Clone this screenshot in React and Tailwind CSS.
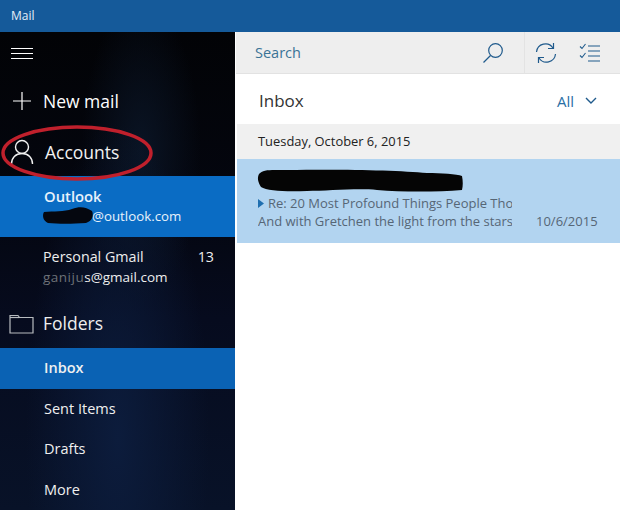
function Row({ children, className = "" }) {
  return <div className={`flex items-center h-[40.5px] pl-[44px] text-[14.5px] text-[#f0f0f0] ${className}`}>{children}</div>;
}

export default function App() {
  return (
    <div className="w-[620px] h-[510px] overflow-hidden flex flex-col bg-white font-['Open_Sans',sans-serif]">
      <div className="h-[32px] shrink-0 flex items-center pl-[11px] bg-[#155a9a] text-[#e4eef7] text-[12px]">Mail</div>
      <div className="flex flex-1 min-h-0">
        <aside className="relative w-[235px] shrink-0 flex flex-col bg-[radial-gradient(ellipse_at_50%_85%,#0c1c3c_0%,rgba(10,22,48,0)_55%),radial-gradient(ellipse_at_60%_25%,#0a1424_0%,rgba(10,20,36,0)_30%),linear-gradient(180deg,#020306_0%,#04060f_35%,#060b1e_60%,#081228_100%)]">
          <div className="h-[42px] flex items-center pl-[11px]">
            <div className="w-[22px] flex flex-col gap-[4px]">
              <div className="h-px bg-white" /><div className="h-px bg-white" /><div className="h-px bg-white" />
            </div>
          </div>
          <div className="h-[54px] flex items-center text-white text-[17.5px]">
            <svg width="20" height="20" viewBox="0 0 20 20" className="ml-[12px] mr-[11px]" stroke="#fff" strokeWidth="1.2"><path d="M10 1v18M1 10h18" /></svg>
            New mail
          </div>
          <div className="h-[48px] flex items-center text-[#f2f2f2] text-[17.5px]">
            <svg width="24" height="26" viewBox="0 0 24 26" className="ml-[10px] mr-[11px]" fill="none" stroke="#f2f2f2" strokeWidth="1.4"><circle cx="12" cy="8" r="6.5" /><path d="M1.5 25c0-6 4-10.500 10.500-10.500S22.500 19 22.500 25" /></svg>
            Accounts
          </div>
          <div className="h-[61px] pb-[1px] flex flex-col justify-center pl-[44px] bg-[#0a6cc4] text-[#e8f2fb]">
            <div className="text-[14.800px] leading-[20px] font-semibold">Outlook</div>
            <div className="text-[13.300px] leading-[20px] pl-[48px]">@outlook.com</div>
          </div>
          <div className="h-[61px] pb-[1px] flex flex-col justify-center pl-[43px] text-[#eeeeee]">
            <div className="flex justify-between pr-[21px] text-[14.300px] leading-[20px]"><span>Personal Gmail</span><span>13</span></div>
            <div className="text-[13.500px] leading-[20px]"><span className="text-[#6d7177] tracking-[0.5px]">ganiju</span>s@gmail.com</div>
          </div>
          <div className="h-[50px] pt-[1px] flex items-center text-[#eeeeee] text-[17.5px]">
            <svg width="25" height="20" viewBox="0 0 25 20" className="ml-[9px] mr-[9px]" fill="none" stroke="#b8bcc0" strokeWidth="1.2"><path d="M1 19V1.500h8l1.500 2H24V19z" /><path d="M1 3.500h9.500" /></svg>
            Folders
          </div>
          <Row className="bg-[#0a62b4] font-semibold text-[#dcebf8]">Inbox</Row>
          <Row>Sent Items</Row>
          <Row>Drafts</Row>
          <Row>More</Row>
          <svg className="absolute left-0 top-[90px] pointer-events-none" width="160" height="62" viewBox="0 0 160 62" fill="none">
            <ellipse cx="77" cy="31" rx="74" ry="26" stroke="#c0202c" strokeWidth="3.500" />
          </svg>
          <svg className="absolute left-[42px] top-[174px] pointer-events-none" width="52" height="20" viewBox="0 0 52 20">
            <path d="M2 6C12 5 22 6 30 3c8-3 14-2 20 2 2 5 0 10-6 12-14 1-28 1-38 0C1 15 0 9 2 6z" fill="#05070f" />
          </svg>
        </aside>
        <main className="relative flex-1 min-w-0 flex flex-col bg-white">
          <div className="h-[42px] ml-[1px] flex items-center bg-[#eeeeee] border-b border-[#e2e2e2]">
            <span className="pl-[19px] flex-1 text-[14.500px] text-[#3a7396]">Search</span>
            <svg width="22" height="22" viewBox="0 0 22 22" className="mr-[20px]" fill="none" stroke="#1f5a8c" strokeWidth="1.200"><circle cx="13.500" cy="8.500" r="6.800" /><path d="M8.500 13.500 1.500 20.500" /></svg>
            <div className="w-px h-[42px] bg-[#e3e3e3]" />
            <svg width="22" height="22" viewBox="0 0 22 22" className="ml-[10px] mr-[22px]" fill="none" stroke="#1f5a8c" strokeWidth="1.200"><path d="M1.500 10A9 9 0 0 1 18 6M20.500 12A9 9 0 0 1 4 16" /><path d="M18.500 1v5.500H13M3.500 21v-5.500H9" /></svg>
            <svg width="22" height="20" viewBox="0 0 22 20" className="mr-[19px]" fill="none" stroke="#1f5a8c" strokeWidth="1.100"><path d="M1 3.500 3 5.500 6.500 1M1 12.500 3 14.500 6.500 10M9 3h12M9 8h12M9 13h12M9 18h12" /></svg>
          </div>
          <div className="h-[50px] pt-[4px] flex items-center bg-white">
            <span className="pl-[24px] flex-1 text-[17px] text-[#333333]">Inbox</span>
            <span className="text-[15px] text-[#2a6fa5] mr-[11px]">All</span>
            <svg width="12" height="8" viewBox="0 0 12 8" className="mr-[23px]" fill="none" stroke="#1f5a8c" strokeWidth="1.400"><path d="M1 1l5 5 5-5" /></svg>
          </div>
          <div className="h-[35px] ml-[2px] flex items-center pl-[21px] bg-[#f0f0f0] text-[12.900px] text-[#222222]">Tuesday, October 6, 2015</div>
          <div className="h-[84px] ml-[2px] bg-[#b2d4f0] flex flex-col pl-[21px] pt-[35px] text-[13px] leading-[18px] text-[#566676]">
            <div className="flex items-center w-[254px] overflow-hidden whitespace-nowrap">
              <svg width="6" height="9" viewBox="0 0 6 9" className="mr-[4px] shrink-0"><path d="M0 0l6 4.500L0 9z" fill="#1f6fb0" /></svg>
              Re: 20 Most Profound Things People Tho
            </div>
            <div className="flex whitespace-nowrap">
              <span className="w-[254px] overflow-hidden">And with Gretchen the light from the stars</span>
              <span className="ml-[24px]">10/6/2015</span>
            </div>
          </div>
          <svg className="absolute left-[22px] top-[136px] pointer-events-none" width="208" height="26" viewBox="0 0 208 26">
            <path d="M2 6C6 1 14 2 30 2c50-1 110 0 140 3 14 0 30 1 35 3 1 5 1 10 0 14-25 2-60 2-85 0-20-2-50 1-70 1-20 1-40 0-46-4C1 14 0 10 2 6z" fill="#050505" />
          </svg>
        </main>
      </div>
    </div>
  );
}
